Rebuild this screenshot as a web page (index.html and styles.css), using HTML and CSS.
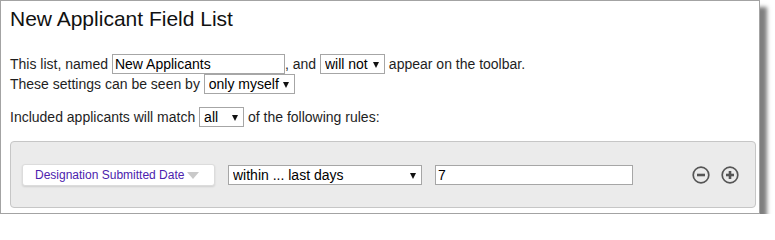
FILE: index.html
```html
<!DOCTYPE html>
<html>
<head>
<meta charset="utf-8">
<title>New Applicant Field List</title>
<link rel="stylesheet" href="styles.css">
</head>
<body>
<div class="panel">
  <h1 class="title">New Applicant Field List</h1>
  <div class="settings">
    <div class="line">This list, named <input class="text-input name-input" type="text" value="New Applicants">, and <span class="select-wrap w-willnot"><select class="sel"><option>will not</option><option>will</option></select></span> appear on the toolbar.</div>
    <div class="line">These settings can be seen by <span class="select-wrap w-only"><select class="sel"><option>only myself</option><option>everyone</option></select></span></div>
  </div>
  <div class="line match-line">Included applicants will match <span class="select-wrap w-all"><select class="sel"><option>all</option><option>any</option></select></span> of the following rules:</div>
  <div class="rules">
    <div class="rule">
      <button class="field-btn" type="button"><span class="field-label">Designation Submitted Date</span><span class="caret"></span></button>
      <span class="select-wrap w-within"><select class="sel"><option>within ... last days</option></select></span>
      <input class="text-input value-input" type="text" value="7">
      <div class="actions">
        <svg class="icon" width="18" height="18" viewBox="0 0 18 18"><circle cx="9" cy="9" r="7.8" fill="none" stroke="#555" stroke-width="1.7"/><line x1="5" y1="9" x2="13" y2="9" stroke="#555" stroke-width="2.6"/></svg>
        <svg class="icon" width="18" height="18" viewBox="0 0 18 18"><circle cx="9" cy="9" r="7.8" fill="none" stroke="#555" stroke-width="1.7"/><line x1="5" y1="9" x2="13" y2="9" stroke="#555" stroke-width="2.6"/><line x1="9" y1="5" x2="9" y2="13" stroke="#555" stroke-width="2.6"/></svg>
      </div>
    </div>
  </div>
</div>
</body>
</html>
```

FILE: styles.css
```css
html, body {
  margin: 0;
  padding: 0;
  background: #ffffff;
}

body {
  font-family: "Liberation Sans", Arial, sans-serif;
  font-size: 14px;
  color: #1e1e1e;
}

.panel {
  box-sizing: border-box;
  width: 760px;
  border: 1px solid #a3a3a3;
  background: #ffffff;
  padding: 6px 3px 5px 9px;
  box-shadow: 7px 7px 4px rgba(0, 0, 0, 0.5);
}

.title {
  margin: 0;
  font-size: 21px;
  line-height: 24px;
  font-weight: normal;
  color: #111111;
}

.settings {
  margin-top: 23px;
}

.line {
  height: 20px;
  line-height: 20px;
  white-space: nowrap;
}

.match-line {
  margin-top: 13px;
}

.text-input {
  box-sizing: border-box;
  height: 20px;
  margin: 0;
  border: 1px solid #a6a6a6;
  padding: 0 2px;
  font-family: "Liberation Sans", Arial, sans-serif;
  font-size: 14px;
  color: #000000;
  background: #ffffff;
  vertical-align: top;
  outline: none;
}

.name-input {
  width: 173px;
}

.value-input {
  width: 198px;
  margin-left: 13px;
}

.select-wrap {
  position: relative;
  display: inline-block;
  height: 20px;
  vertical-align: top;
}

.select-wrap::after {
  content: "";
  position: absolute;
  right: 6px;
  top: 8px;
  border-left: 3.5px solid transparent;
  border-right: 3.5px solid transparent;
  border-top: 6px solid #111111;
  pointer-events: none;
}

.sel {
  -webkit-appearance: none;
  appearance: none;
  box-sizing: border-box;
  width: 100%;
  height: 20px;
  margin: 0;
  border: 1px solid #a6a6a6;
  border-radius: 0;
  padding: 0 0 0 4px;
  background: #ffffff;
  font-family: "Liberation Sans", Arial, sans-serif;
  font-size: 14px;
  line-height: 18px;
  color: #000000;
  outline: none;
}

.w-willnot { width: 65px; }
.w-only { width: 91px; }
.w-all { width: 45px; }
.w-within { width: 194px; margin-left: 13px; }

.rules {
  margin-top: 14px;
  border: 1px solid #c6c6c6;
  border-radius: 4px;
  background: #ebebeb;
  padding: 22px 16px 21px 11px;
}

.rule {
  display: flex;
  align-items: center;
  height: 22px;
}

.field-btn {
  box-sizing: border-box;
  display: flex;
  align-items: center;
  width: 193px;
  height: 22px;
  margin: 0;
  padding: 0 0 0 12px;
  border: 1px solid #dcdcdc;
  border-radius: 3px;
  background: #ffffff;
  box-shadow: 0 1px 2px rgba(0, 0, 0, 0.12);
  font-family: "Liberation Sans", Arial, sans-serif;
  font-size: 12px;
  color: #4c22ae;
  cursor: pointer;
}

.caret {
  display: inline-block;
  margin-left: 3px;
  border-left: 6px solid transparent;
  border-right: 6px solid transparent;
  border-top: 7px solid #c9c9c9;
}

.actions {
  margin-left: auto;
  display: flex;
  gap: 11px;
}

.icon {
  display: block;
}
```
